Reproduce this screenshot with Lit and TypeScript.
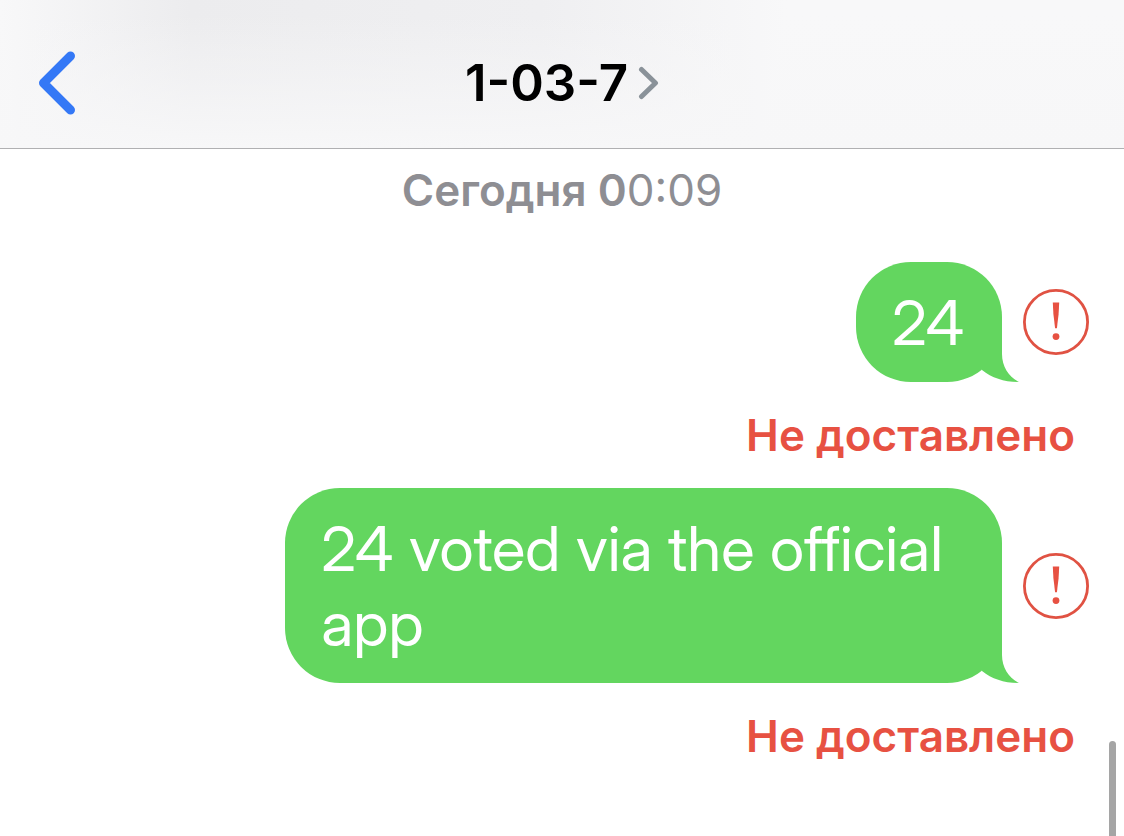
import { LitElement, html, css } from "lit";
import { customElement, property } from "lit/decorators.js";

@customElement("message-item")
class MessageItem extends LitElement {
  @property() text = "";
  @property() status = "";

  static styles = css`
    :host {
      display: block;
    }
    .row {
      display: flex;
      justify-content: flex-end;
      align-items: center;
      gap: 21px;
    }
    .bubble {
      position: relative;
      box-sizing: border-box;
      max-width: 68%;
      margin: 0;
      padding: 23px 38px 22px 36px;
      border-radius: 55px;
      background: #63d65f;
      color: #fff;
      font-family: "Inter Display", Inter, "Liberation Sans", sans-serif;
      font-size: 62px;
      line-height: 75px;
    }
    .tail {
      position: absolute;
      right: -18px;
      bottom: 0;
      width: 38px;
      height: 60px;
      fill: #63d65f;
    }
    .alert {
      flex: none;
      width: 66px;
      height: 66px;
      padding: 0;
      border: 0;
      background: none;
      cursor: pointer;
    }
    .alert svg {
      display: block;
    }
    .status {
      margin: 0;
      padding: 27px 14px 27px 0;
      color: #e75142;
      font-size: 44px;
      font-weight: 600;
      line-height: 52px;
      text-align: right;
    }
  `;

  render() {
    return html`
      <div class="row">
        <p class="bubble">
          ${this.text}<svg class="tail" viewBox="0 0 38 60" aria-hidden="true">
            <path d="M20 0V32C20 45 27 55 37 60C22 60 10 56 0 48V0Z" />
          </svg>
        </p>
        <button class="alert" type="button" aria-label=${this.status}>
          <svg width="66" height="66" viewBox="0 0 66 66" aria-hidden="true">
            <circle cx="33" cy="33" r="31.6" fill="none" stroke="#e05243" stroke-width="2.8" />
            <path d="M29.8 13.4H36.2L35.6 25L33.9 39.2H32.1L30.4 25Z" fill="#e75142" />
            <circle cx="33" cy="47.6" r="3.4" fill="#e75142" />
          </svg>
        </button>
      </div>
      <p class="status">${this.status}</p>
    `;
  }
}

@customElement("app-root")
class AppRoot extends LitElement {
  private messages = [
    { text: "24", status: "Не доставлено" },
    { text: "24 voted via the official app", status: "Не доставлено" },
  ];

  static styles = css`
    :host {
      display: block;
      position: relative;
      min-height: 100vh;
      overflow: hidden;
      background: #fff;
      font-family: Inter, "Liberation Sans", sans-serif;
    }
    .bar {
      display: grid;
      grid-template-columns: 1fr auto 1fr;
      align-items: center;
      box-sizing: border-box;
      height: 149px;
      padding: 18px 35px 0;
      border-bottom: 1px solid #b0b0b2;
      background:
        linear-gradient(to top, #f7f7f8, rgba(247, 247, 248, 0) 90%),
        linear-gradient(to right, #f8f8f9, #ececee 17%, #efeff1 48%, #f8f8f9 70%);
    }
    button {
      padding: 0;
      border: 0;
      background: none;
      font-family: inherit;
      cursor: pointer;
    }
    .back {
      justify-self: start;
    }
    svg {
      display: block;
      fill: none;
      stroke-linecap: round;
      stroke-linejoin: round;
    }
    .contact {
      display: flex;
      align-items: center;
      gap: 9px;
    }
    .name {
      margin: 0;
      color: #000;
      font-size: 51px;
      font-weight: 600;
      line-height: 60px;
    }
    .thread {
      padding: 15px 35px 0;
    }
    .date {
      display: block;
      margin-bottom: 46px;
      color: #8e8e93;
      font-size: 44px;
      font-weight: 400;
      line-height: 52px;
      text-align: center;
    }
    .day {
      font-weight: 600;
    }
    .scroll {
      position: absolute;
      right: 8px;
      bottom: 0;
      width: 7px;
      height: 95px;
      border-radius: 4px 4px 0 0;
      background: #a5a5a5;
    }
  `;

  render() {
    return html`
      <header class="bar">
        <button class="back" type="button" aria-label="Назад">
          <svg width="44" height="66" viewBox="0 0 44 66" stroke="#3478f6" stroke-width="9">
            <path d="M35.5 6L8.5 33L35.5 60" />
          </svg>
        </button>
        <button class="contact" type="button">
          <h1 class="name">1-03-7</h1>
          <svg width="22" height="36" viewBox="0 0 22 36" stroke="#8a9299" stroke-width="5">
            <path d="M4.5 4.5L18.5 18L4.5 31.5" />
          </svg>
        </button>
      </header>
      <main class="thread">
        <time class="date"><span class="day">Сегодня 0</span>0:09</time>
        ${this.messages.map(
          (m) => html`<message-item .text=${m.text} .status=${m.status}></message-item>`
        )}
      </main>
      <div class="scroll"></div>
    `;
  }
}
